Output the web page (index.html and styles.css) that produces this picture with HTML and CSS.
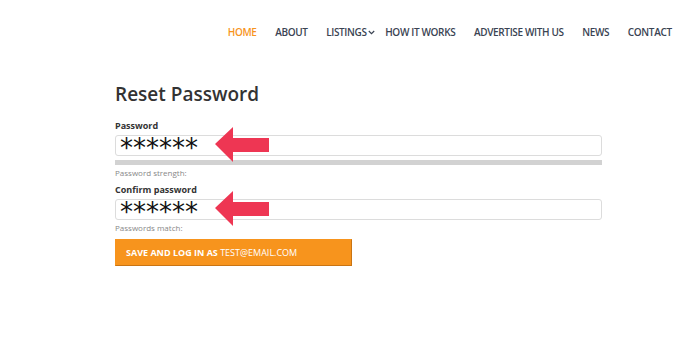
FILE: index.html
```html
<!DOCTYPE html>
<html lang="en">
<head>
  <meta charset="UTF-8" />
  <meta name="viewport" content="width=device-width, initial-scale=1.0" />
  <title>Reset Password</title>
  <link rel="stylesheet" href="styles.css">
</head>
<body>
  <header class="topbar">
    <nav class="menu">
      <a class="menu-item active" href="#">HOME</a>
      <a class="menu-item" href="#">ABOUT</a>
      <a class="menu-item has-sub" href="#">LISTINGS<svg class="chev" width="7" height="5" viewBox="0 0 7 5"><path d="M0.8 1 L3.5 3.7 L6.2 1" fill="none" stroke="#3a4352" stroke-width="1.2"/></svg></a>
      <a class="menu-item" href="#">HOW IT WORKS</a>
      <a class="menu-item" href="#">ADVERTISE WITH US</a>
      <a class="menu-item" href="#">NEWS</a>
      <a class="menu-item" href="#">CONTACT</a>
    </nav>
  </header>

  <main class="content">
    <h1 class="title">Reset Password</h1>
    <form class="reset-form">
      <label class="field-label">Password</label>
      <div class="field">
        <div class="input"><span class="stars">******</span></div>
        <svg class="arrow" width="54" height="35" viewBox="0 0 54 35"><polygon points="0,17 18,0 18,11 54,11 54,25 18,25 18,35" fill="#ee3653"/></svg>
      </div>
      <div class="strength-bar"></div>
      <div class="hint">Password strength:</div>

      <label class="field-label">Confirm password</label>
      <div class="field">
        <div class="input"><span class="stars">******</span></div>
        <svg class="arrow" width="54" height="35" viewBox="0 0 54 35"><polygon points="0,17 18,0 18,11 54,11 54,25 18,25 18,35" fill="#ee3653"/></svg>
      </div>
      <div class="hint">Passwords match:</div>

      <button class="save-btn" type="button"><b>SAVE AND LOG IN AS</b> TEST@EMAIL.COM</button>
    </form>
  </main>
</body>
</html>
```

FILE: styles.css
```css
body {
  margin: 0;
  background: #fff;
  font-family: 'Open Sans', sans-serif;
  color: #333;
}

.topbar {
  display: flex;
  justify-content: flex-end;
  padding: 25px 19px 0 0;
}

.menu {
  display: flex;
}

.menu-item {
  display: flex;
  align-items: center;
  padding: 0 9.3px;
  font-size: 10px;
  line-height: 14px;
  font-weight: 600;
  letter-spacing: -0.35px;
  color: #3a4352;
  text-decoration: none;
}

.menu-item.active {
  color: #f7941d;
}

.chev {
  margin: 0 -8px 0 1px;
}

.content {
  width: 487px;
  padding: 43px 0 0 115px;
}

.title {
  margin: 0 0 14px;
  font-size: 19px;
  line-height: 24px;
  font-weight: 600;
  color: #333;
}

.field-label {
  display: block;
  font-size: 9px;
  line-height: 12px;
  font-weight: 700;
  color: #333;
  margin-bottom: 3px;
}

.field {
  position: relative;
}

.input {
  height: 19px;
  border: 1px solid #dcdcdc;
  border-radius: 3px;
  padding-left: 4px;
}

.stars {
  display: block;
  height: 16px;
  padding-top: 3px;
  font-family: 'DejaVu Sans', sans-serif;
  font-size: 26px;
  line-height: 19px;
  color: #111;
}

.arrow {
  position: absolute;
  left: 100px;
  top: -8px;
}

.strength-bar {
  height: 5px;
  margin-top: 4px;
  background: #d2d2d2;
}

.hint {
  font-size: 8px;
  line-height: 11px;
  color: #888;
  margin: 2px 0 6px;
}

.save-btn {
  display: block;
  width: 237px;
  height: 27px;
  margin-top: 4px;
  padding: 0 0 0 10px;
  text-align: left;
  background: #f7941d;
  border: 1px solid #f7941d;
  border-right-color: #c97413;
  border-bottom-color: #c97413;
  color: #fff;
  font-family: 'Open Sans', sans-serif;
  font-size: 9px;
}

.save-btn b {
  font-weight: 700;
}
```
